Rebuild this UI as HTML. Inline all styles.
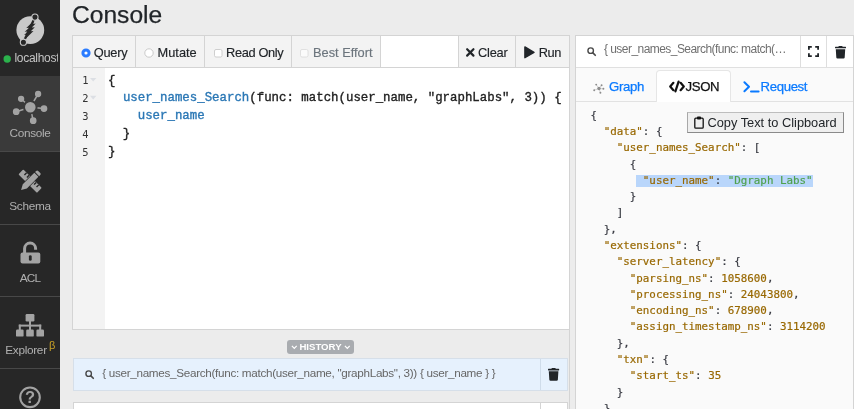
<!DOCTYPE html>
<html><head><meta charset="utf-8">
<style>
*{box-sizing:border-box;margin:0;padding:0}
html,body{width:854px;height:409px;overflow:hidden;background:#ececec;font-family:"Liberation Sans",sans-serif;color:#212529}
#sb{position:absolute;left:0;top:0;width:60px;height:409px;background:#272727;overflow:hidden}
.it{position:absolute;left:0;width:60px;border-top:1px solid #484848;color:#b0b0b0;font-size:11.8px;letter-spacing:-0.3px}
.it .lb{position:absolute;left:0;width:60px;text-align:center;white-space:nowrap;line-height:14px}
svg{position:absolute;overflow:visible}
h1{position:absolute;left:72px;top:0.4px;font-size:24.6px;font-weight:400;line-height:30px;color:#212529;-webkit-text-stroke:0.25px #212529}
#ed{position:absolute;left:72px;top:35px;width:498px;height:295px;background:#fff;border:1px solid #d4d4d4}
#tb{position:absolute;left:0;top:0;width:496px;height:32px;border-bottom:1px solid #d4d4d4;background:#fff}
.tbb{position:absolute;top:0;height:31px;background:#f3f3f3;border-right:1px solid #d4d4d4;font-size:12.800px;line-height:33px;white-space:nowrap;-webkit-text-stroke:0.150px}
.tbb span{position:absolute;top:0}
#gut{position:absolute;left:0;top:32px;width:32px;height:261px;background:#f3f3f3}
.ln{position:absolute;left:0;width:15.500px;text-align:right;font-family:"DejaVu Sans Mono",monospace;font-size:10.400px;color:#333;line-height:18px}
.cl{position:absolute;left:35px;font-family:"Liberation Mono",monospace;font-size:12.4px;line-height:18px;white-space:pre;color:#222;-webkit-text-stroke:0.35px}
.cl b{font-weight:400;color:#2a77b5}
#hist{position:absolute;left:287px;top:340.400px;width:67px;height:13.700px;background:#a9acb0;border-radius:3px;color:#fff;font-size:9.650px;font-weight:700;text-align:center;line-height:14.400px}
#hrow{position:absolute;left:73px;top:358px;width:495px;height:33px;background:#e6f1fd;border:1px solid #d6dfe9;border-radius:0}
#hrow2{position:absolute;left:73px;top:402px;width:495px;height:20px;background:#fff;border:1px solid #d4d4d4}
#rp{position:absolute;left:575px;top:35px;width:279px;height:380px;background:#fafafa;border:1px solid #d4d4d4}
#rtop{position:absolute;left:0;top:0;width:277px;height:32px;border-bottom:1px solid #e0e0e0;background:#fff}
#rtabs{position:absolute;left:0;top:32px;width:277px;height:34px;background:#fafafa;border-bottom:1px solid #e2e2e2}
.tab{position:absolute;top:34px;height:32px;font-size:13.2px;letter-spacing:-0.35px;line-height:33.600px;color:#0a7aff;-webkit-text-stroke:0.250px;white-space:nowrap}
.js{position:absolute;font-family:"DejaVu Sans Mono",monospace;font-size:10.850px;line-height:16.280px;white-space:pre;color:#383a42;-webkit-text-stroke:0.2px}
.js i{font-style:normal;color:#986801}
.js u{text-decoration:none;color:#50a14f}
</style></head><body><div id="root" style="position:absolute;left:0;top:0;width:854px;height:409px;overflow:hidden;will-change:transform">
<div id="sb">
 <div class="it" style="top:-1px;height:77px;border:0">
  <svg style="left:0;top:1px" width="60" height="76" viewBox="0 0 60 76">
   <circle cx="30.3" cy="30.05" r="13.9" fill="#c9c9c9"/>
   <line x1="34.95" y1="17.1" x2="23.4" y2="42.2" stroke="#272727" stroke-width="2.2"/>
   <path d="M34 20.5 L26.3 27.9 L29.3 27.7 L24.7 31.7 L27.9 31.500 L24.100 35.100 L26.600 34.800 L24.600 39.800 L33.500 31 L30.800 31.200 L34.800 27.300 L31.800 27.600 L35.700 23.500 L33.200 24 Z" fill="#272727"/>
   <circle cx="34.95" cy="17.1" r="3.1" fill="#272727" stroke="#c9c9c9" stroke-width="1.1"/>
   <circle cx="23.4" cy="42.2" r="3.1" fill="#272727" stroke="#c9c9c9" stroke-width="1.1"/>
   <circle cx="7.2" cy="59" r="3.7" fill="#2bb24c"/>
  </svg>
  <span class="lb" style="top:52.300px;left:14.500px;text-align:left;color:#c4c4c4;font-size:12px;letter-spacing:-0.300px;width:43.500px;overflow:hidden">localhost</span></div>
 <div class="it" style="top:76px;height:75px;background:#3a3a3a;border-top-color:#3a3a3a">
  <svg style="left:0;top:-2px" width="60" height="76" viewBox="0 75 60 76"><g fill="#a3a3a3" stroke="#a3a3a3" stroke-width="1.5">
   <line x1="30.3" y1="107.2" x2="38.1" y2="94"/><line x1="30.3" y1="107.2" x2="21.1" y2="98.8"/><line x1="30.3" y1="107.2" x2="44" y2="108.6"/><line x1="30.3" y1="107.2" x2="16.2" y2="111.7"/><line x1="30.3" y1="107.2" x2="33.2" y2="120.7"/>
   <circle cx="30.3" cy="107.2" r="6.3" stroke="#3a3a3a" stroke-width="2"/>
   <circle cx="38.1" cy="94" r="2.4"/><circle cx="21.1" cy="98.8" r="2.4"/><circle cx="44" cy="108.6" r="2.6"/><circle cx="16.2" cy="111.7" r="2.6"/><circle cx="33.2" cy="120.7" r="2.6"/></g>
  </svg>
  <span class="lb" style="top:49px">Console</span></div>
 <div class="it" style="top:151px;height:73px">
  <svg style="left:20.4px;top:19.4px" width="20.2" height="20.2" viewBox="0 0 23 23"><g fill="#a3a3a3">
   <g transform="rotate(-45 11.5 11.5)"><rect x="7.6" y="-3.4" width="7.8" height="29.8" rx="1"/></g>
   <g transform="rotate(45 11.5 11.5)"><path d="M8.2 -1.6 a1.6 1.6 0 0 1 1.6 -1.6 h3.4 a1.6 1.6 0 0 1 1.6 1.6 v1.8 h-6.6z M8.2 1.4 h6.6 v18.6 l-3.3 6 l-3.3 -6z" stroke="#272727" stroke-width="1.6" paint-order="stroke"/></g>
   </g>
   <g stroke="#272727" stroke-width="1.6" fill="none"><path d="M7.54 2.02 l-2.5 2.5 M10.37 4.85 l-2.5 2.5 M18.5 12.98 l-2.5 2.5 M21.33 15.81 l-2.5 2.5"/></g>
  </svg>
  <span class="lb" style="top:46.500px">Schema</span></div>
 <div class="it" style="top:224px;height:73px">
  <svg style="left:20px;top:17px" width="21" height="23" viewBox="0 0 21 23">
   <path d="M4.6 11 V6.600 a5.500 5.500 0 0 1 11 0 V7.800" fill="none" stroke="#a3a3a3" stroke-width="3" stroke-linecap="butt"/>
   <rect x="0.500" y="10.400" width="19.800" height="11.100" rx="2" fill="#a3a3a3"/>
   <rect x="8.900" y="13.200" width="2.800" height="5.600" rx="1.400" fill="#272727"/>
  </svg>
  <span class="lb" style="top:46px;letter-spacing:-0.800px">ACL</span></div>
 <div class="it" style="top:296px;height:72px">
  <svg style="left:16px;top:16.500px" width="28" height="23" viewBox="0 0 28 23"><g fill="#a3a3a3">
   <rect x="9.6" y="0" width="8.8" height="7.4" rx="1.2"/><rect x="0" y="15.6" width="7.6" height="7" rx="1.2"/><rect x="10.2" y="15.6" width="7.6" height="7" rx="1.2"/><rect x="20.4" y="15.6" width="7.6" height="7" rx="1.2"/>
   <rect x="13" y="7" width="2" height="9"/><rect x="2.8" y="10.6" width="22.4" height="2"/><rect x="2.8" y="10.6" width="2" height="5.4"/><rect x="23.2" y="10.6" width="2" height="5.4"/></g>
  </svg>
  <span class="lb" style="top:46px;left:-4px">Explorer</span><span style="position:absolute;left:49px;top:42.300px;font-size:11px;color:#c9a227;line-height:12px">β</span></div>
 <div class="it" style="top:368px;height:72px">
  <svg style="left:18px;top:16.200px" width="24" height="24" viewBox="0 0 24 24"><circle cx="12" cy="12.3" r="9.8" fill="none" stroke="#a3a3a3" stroke-width="2.1"/>
  <text x="12" y="18.2" text-anchor="middle" font-family="Liberation Sans,sans-serif" font-weight="700" font-size="16.5" fill="#a3a3a3">?</text></svg>
 </div>
</div>
<h1>Console</h1>
<div id="ed">
 <div id="tb">
  <div class="tbb" style="left:0;width:63px"><svg style="left:7.600px;top:12px" width="10" height="10"><circle cx="5" cy="5" r="3.100" fill="#fff" stroke="#2b7cff" stroke-width="3"/></svg><span style="left:20.700px;letter-spacing:-0.200px">Query</span></div>
  <div class="tbb" style="left:63px;width:69px"><svg style="left:8px;top:12px" width="10" height="10"><circle cx="5" cy="5" r="4.2" fill="#fff" stroke="#c4c4c4" stroke-width="0.9"/></svg><span style="left:21.600px">Mutate</span></div>
  <div class="tbb" style="left:132px;width:87px"><svg style="left:9px;top:13px" width="9" height="9"><rect x="0.5" y="0.5" width="7.5" height="7.5" rx="1.5" fill="#fff" stroke="#c9c9c9" stroke-width="0.9"/></svg><span style="left:21px;letter-spacing:-0.35px">Read Only</span></div>
  <div class="tbb" style="left:219px;width:89px;color:#6c757d"><svg style="left:7.700px;top:13px" width="9" height="9"><rect x="0.5" y="0.5" width="7.5" height="7.5" rx="1.5" fill="#fbfbfb" stroke="#dcdcdc" stroke-width="0.9"/></svg><span style="left:21px">Best Effort</span></div>
  <div class="tbb" style="left:385px;width:58px;border-left:1px solid #d4d4d4"><svg style="left:7.200px;top:11.900px" width="8.600" height="8.800" viewBox="0 0 9 9" preserveAspectRatio="none"><path d="M1.2 1.2 L7.8 7.8 M7.8 1.2 L1.2 7.8" stroke="#212529" stroke-width="2.300" stroke-linecap="round"/></svg><span style="left:19px;letter-spacing:-0.200px">Clear</span></div>
  <div class="tbb" style="left:443px;width:53px;border-right:0"><svg style="left:8.300px;top:10.300px" width="11" height="12.600" viewBox="0 0 11 12" preserveAspectRatio="none"><path d="M0.9 0.9 L10 6 L0.9 11.1 Z" fill="#212529" stroke="#212529" stroke-width="1.4" stroke-linejoin="round"/></svg><span style="left:22.800px;letter-spacing:-0.500px">Run</span></div>
 </div>
 <div id="gut"></div>
 <div class="ln" style="top:35.300px">1</div><div class="ln" style="top:53.150px">2</div><div class="ln" style="top:71px">3</div><div class="ln" style="top:88.850px">4</div><div class="ln" style="top:106.700px">5</div>
 <svg style="left:16.5px;top:42px" width="8" height="24"><path d="M0 0 h6.4 l-3.2 3.6z M0 17.85 h6.4 l-3.2 3.6z" fill="#dcdfe4"/></svg>
 <div class="cl" style="top:35.6px">{</div>
 <div class="cl" style="top:53.45px">  <b>user_names_Search</b>(func: match(user_name, "graphLabs", 3)) {</div>
 <div class="cl" style="top:71.3px">    <b>user_name</b></div>
 <div class="cl" style="top:89.15px">  }</div>
 <div class="cl" style="top:107px">}</div>
</div>
<div style="position:absolute;left:569px;top:35px;width:1px;height:380px;background:#d4d4d4"></div>
<div id="hist"><svg style="left:4px;top:4.800px" width="6.600" height="5" viewBox="0 0 6 5"><path d="M0.6 0.8 L3 3.4 L5.4 0.8" fill="none" stroke="#fff" stroke-width="1.2"/></svg>HISTORY<svg style="left:56.700px;top:4.800px" width="6.600" height="5" viewBox="0 0 6 5"><path d="M0.6 0.8 L3 3.4 L5.4 0.8" fill="none" stroke="#fff" stroke-width="1.2"/></svg></div>
<div id="hrow">
 <svg style="left:10.500px;top:10.500px" width="9.200" height="9.200" viewBox="0 0 10 10"><circle cx="4" cy="4" r="3" fill="none" stroke="#484848" stroke-width="1.500"/><path d="M6.400 6.400 L9 9" stroke="#484848" stroke-width="1.800" stroke-linecap="round"/></svg>
 <span style="position:absolute;left:28.200px;top:0;line-height:27.800px;font-size:11.700px;letter-spacing:-0.300px;color:#666;white-space:nowrap" id="ht">{ user_names_Search(func: match(user_name, "graphLabs", 3)) { user_name } }</span>
 <div style="position:absolute;left:466px;top:0;width:1px;height:31px;background:#cfdcea"></div>
 <svg style="left:474.400px;top:8.500px" width="11.200" height="12.800" preserveAspectRatio="none" viewBox="0 0 448 512"><path fill="#212529" d="M432 32H312l-9.4-18.700A24 24 0 0 0 281.100 0H166.800a23.720 23.720 0 0 0-21.400 13.300L136 32H16A16 16 0 0 0 0 48v32a16 16 0 0 0 16 16h416a16 16 0 0 0 16-16V48a16 16 0 0 0-16-16zM53.200 467a48 48 0 0 0 47.900 45h245.800a48 48 0 0 0 47.900-45L416 128H32z"/></svg>
</div>
<div id="hrow2"><div style="position:absolute;left:466px;top:0;width:1px;height:20px;background:#d4d4d4"></div></div>
<div id="rp">
 <div id="rtop">
  <svg style="left:11px;top:11px" width="9.200" height="9.200" viewBox="0 0 10 10"><circle cx="4" cy="4" r="3" fill="none" stroke="#484848" stroke-width="1.500"/><path d="M6.400 6.400 L9 9" stroke="#484848" stroke-width="1.800" stroke-linecap="round"/></svg>
  <span style="position:absolute;left:28px;top:0;line-height:27.400px;font-size:12px;letter-spacing:-0.550px;color:#707070;white-space:nowrap" id="rt">{ user_names_Search(func: match(…</span>
  <div style="position:absolute;left:224px;top:0;width:1px;height:31px;background:#dedede"></div>
  <div style="position:absolute;left:249.700px;top:0;width:1px;height:31px;background:#dedede"></div>
  <svg style="left:232px;top:9.900px" width="11" height="11" viewBox="0 0 11 11"><path d="M0.9 3.8 V0.9 H3.8 M7.2 0.9 H10.1 V3.8 M10.1 7.2 V10.1 H7.2 M3.8 10.1 H0.9 V7.2" fill="none" stroke="#212529" stroke-width="1.8"/></svg>
  <svg style="left:259px;top:9.5px" width="11" height="12.6" viewBox="0 0 448 512" preserveAspectRatio="none"><path fill="#212529" d="M432 32H312l-9.4-18.700A24 24 0 0 0 281.100 0H166.800a23.720 23.720 0 0 0-21.400 13.300L136 32H16A16 16 0 0 0 0 48v32a16 16 0 0 0 16 16h416a16 16 0 0 0 16-16V48a16 16 0 0 0-16-16zM53.200 467a48 48 0 0 0 47.900 45h245.800a48 48 0 0 0 47.900-45L416 128H32z"/></svg>
 </div>
 <div id="rtabs"></div>
 <svg style="left:17px;top:47px" width="12" height="11" viewBox="0 0 12 11"><g stroke="#aaa" stroke-width="0.500" fill="#8c8c8c"><path d="M6 5.500 L3.200 1.600 M6 5.500 L10.400 5.800 M6 5.500 L1.200 7.200 M6 5.500 L7.400 9.800 M6 5.500 L8.600 2.200" fill="none"/><circle cx="6" cy="5.500" r="1.700" stroke="none"/><circle cx="3.200" cy="1.600" r="0.950" stroke="none"/><circle cx="10.400" cy="5.800" r="0.950" stroke="none"/><circle cx="1.200" cy="7.200" r="0.950" stroke="none"/><circle cx="7.400" cy="9.800" r="0.950" stroke="none"/><circle cx="8.600" cy="2.200" r="0.950" stroke="none"/></g></svg>
 <div class="tab" style="left:33px">Graph</div>
 <div class="tab" style="left:79.500px;width:75px;height:32px;background:#fff;border:1px solid #e6e6e6;border-bottom:0;border-radius:4px 4px 0 0;color:#111">
  <svg style="left:12px;top:10px" width="16" height="11" viewBox="0 0 16 11"><path d="M4.400 1.800 L1.200 5.500 L4.400 9.200 M11.600 1.800 L14.800 5.500 L11.600 9.200 M9.600 0.600 L6.400 10.400" fill="none" stroke="#111" stroke-width="2.200" stroke-linecap="round" stroke-linejoin="round"/></svg>
  <span style="position:absolute;left:29px;top:-1px">JSON</span></div>
 <svg style="left:167px;top:45px" width="17" height="12" viewBox="0 0 17 12"><path d="M1.400 1.300 L6 5.800 L1.400 10.300 M8 10.600 H15.600" fill="none" stroke="#0a7aff" stroke-width="2" stroke-linecap="round" stroke-linejoin="round"/></svg>
 <div class="tab" style="left:184.5px">Request</div>
 <div style="position:absolute;left:60px;top:138.500px;width:177px;height:12.500px;background:#b9d6fb"></div>
 <div class="js" style="left:14.600px;top:71.800px">{
  <i>"data"</i>: {
    <i>"user_names_Search"</i>: [
      {
        <i>"user_name"</i>: <u>"Dgraph Labs"</u>
      }
    ]
  },
  <i>"extensions"</i>: {
    <i>"server_latency"</i>: {
      <i>"parsing_ns"</i>: <i>1058600</i>,
      <i>"processing_ns"</i>: <i>24043800</i>,
      <i>"encoding_ns"</i>: <i>678900</i>,
      <i>"assign_timestamp_ns"</i>: <i>3114200</i>
    },
    <i>"txn"</i>: {
      <i>"start_ts"</i>: <i>35</i>
    }
  }</div>
 <div style="position:absolute;left:110.500px;top:75.500px;width:157px;height:21px;background:#efefef;border:1px solid #8a8a8a;border-top-color:#bdbdbd;border-left-color:#a8a8a8;border-radius:0;font-size:12.800px;line-height:19px;white-space:nowrap">
  <svg style="left:6px;top:3px" width="10" height="13" viewBox="0 0 10 13"><rect x="0.800" y="2.200" width="8.400" height="10" rx="1" fill="none" stroke="#111" stroke-width="1.300"/><rect x="3" y="0.600" width="4" height="3" rx="0.800" fill="#111"/></svg>
  <span style="position:absolute;left:20px">Copy Text to Clipboard</span></div>
</div>
</div></body></html>
